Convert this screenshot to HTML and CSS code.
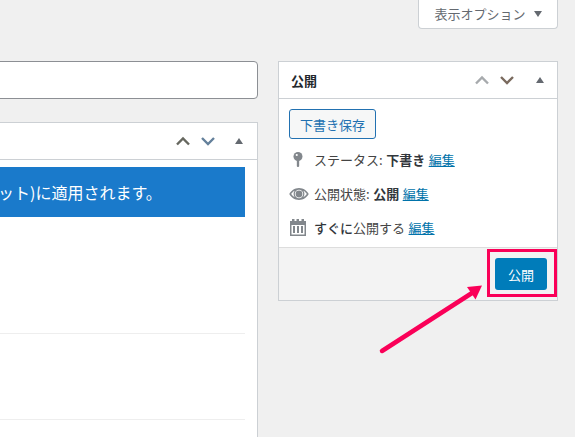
FILE: index.html
```html
<!DOCTYPE html>
<html lang="ja">
<head>
<meta charset="utf-8">
<title>公開</title>
<link rel="stylesheet" href="styles.css">
</head>
<body>
<div class="page">
  <div class="topbar">
    <button class="options">表示オプション<span class="caret"></span></button>
  </div>
  <div class="columns">
    <main class="main">
      <input class="title-input" type="text" aria-label="タイトル">
      <section class="box">
        <header class="box-head">
          <span class="arrows">
            <svg class="chev chev-dark" viewBox="0 0 16 10"><path d="M2 8.500 8 2.500l6 6"/></svg>
            <svg class="chev chev-blue" viewBox="0 0 16 10"><path d="M2 2 8 8l6-6"/></svg>
            <span class="tri"></span>
          </span>
        </header>
        <div class="box-body">
          <div class="notice">ット)に適用されます。</div>
          <div class="row row-first"></div>
          <div class="row row-second"></div>
        </div>
      </section>
    </main>
    <aside class="side">
      <section class="publish">
        <header class="pub-head">
          <h2>公開</h2>
          <span class="arrows">
            <svg class="chev chev-light" viewBox="0 0 16 10"><path d="M2 8.500 8 2.500l6 6"/></svg>
            <svg class="chev chev-brown" viewBox="0 0 16 10"><path d="M2 2 8 8l6-6"/></svg>
            <span class="tri"></span>
          </span>
        </header>
        <div class="pub-body">
          <button class="save">下書き保存</button>
          <div class="meta meta-status">
            <svg class="ico" viewBox="0 0 20 20"><circle cx="10" cy="7.200" r="5"/><rect x="8.700" y="11" width="2.600" height="8" rx="1.200"/><circle class="hole" cx="8.600" cy="5.600" r="1.200"/></svg>
            <span>ステータス: <b>下書き</b> <a href="#">編集</a></span>
          </div>
          <div class="meta meta-visibility">
            <svg class="ico ico-eye" viewBox="0 0 20 14"><path fill-rule="evenodd" d="M10 1C5.500 1 2 3.800.3 7 2 10.200 5.500 13 10 13s8-2.800 9.700-6C18 3.800 14.500 1 10 1Zm0 1.800a4.200 4.200 0 1 1 0 8.400 4.200 4.200 0 0 1 0-8.400ZM2.200 7c.8-1.300 2-2.500 3.400-3.200a6 6 0 0 0 0 6.400A8.500 8.500 0 0 1 2.200 7Zm15.600 0a8.500 8.500 0 0 1-3.400 3.200 6 6 0 0 0 0-6.400c1.400.7 2.600 1.900 3.400 3.200Z"/><circle cx="10" cy="7" r="3.400"/></svg>
            <span>公開状態: <b>公開</b> <a href="#">編集</a></span>
          </div>
          <div class="meta meta-date">
            <svg class="ico" viewBox="0 0 18 18"><path fill-rule="evenodd" d="M1 3h2V1h2.500v2h2V1H10v2h2.500V1H15v2h2v15H1V3Zm1.500 4v9.500h13V7h-13Z"/><path d="M4 8h2v7H4zM8 8h2v7H8zM12 8h2v7h-2z"/></svg>
            <span><b class="soft">すぐに</b>公開する <a href="#">編集</a></span>
          </div>
        </div>
        <footer class="pub-foot">
          <button class="publish-btn">公開</button>
        </footer>
      </section>
    </aside>
  </div>
</div>
<div class="highlight"></div>
<svg class="pointer" viewBox="0 0 575 437"><path class="shaft" d="M382 351 472 293"/><path class="head" d="M482 285.500 467 287 475.500 299.500Z"/></svg>
</body>
</html>
```
FILE: styles.css
```css
html, body { margin: 0; height: 100%; }
body {
  background: #f0f0f0;
  color: #444;
  font-family: "Noto Sans CJK JP", "Noto Sans", sans-serif;
  font-size: 13px;
  overflow: hidden;
  position: relative;
}
.page { height: 437px; display: flex; flex-direction: column; }
.topbar { display: flex; justify-content: flex-end; padding-right: 17px; height: 61px; flex: none; }
.options {
  width: 140px; height: 29px; box-sizing: border-box; padding: 0 0 1px 0;
  background: #fff; border: 1px solid #ccd0d4; border-top: 0; border-radius: 0 0 4px 4px;
  font: inherit; color: #646970; display: flex; align-items: center; justify-content: center; gap: 8px;
}
.caret { width: 0; height: 0; border: 4.500px solid transparent; border-top: 6px solid #646970; border-bottom: 0; }
.columns { display: flex; gap: 20px; flex: 1; min-height: 0; padding-right: 17px; }
.main { width: 268px; margin-left: -10px; flex: none; display: flex; flex-direction: column; }
.title-input {
  display: block; height: 38px; box-sizing: border-box; margin: 0 0 23px; width: 100%;
  background: #fff; border: 1px solid #8c8f94; border-radius: 4px; padding: 0;
}
.box { flex: 1; background: #fff; border: 1px solid #ccd0d4; border-bottom: 0; }
.box-head { height: 36px; border-bottom: 1px solid #ccd0d4; display: flex; justify-content: flex-end; align-items: center; padding-right: 14px; }
.box-head .tri { margin-left: 10px; }
.arrows { display: flex; align-items: center; gap: 9px; }
.chev { width: 16px; height: 10px; fill: none; stroke: #646970; stroke-width: 2.400; }
.chev-dark { stroke: #66675f; }
.chev-blue { stroke: #64809b; }
.chev-light { stroke: #a7aaad; }
.chev-brown { stroke: #7a6a5e; }
.tri { width: 0; height: 0; margin-left: 12px; border: 4px solid transparent; border-bottom: 6px solid #646970; border-top: 0; }
.box-body { padding-top: 7px; padding-right: 12px; }
.notice {
  height: 50px; background: #1a7acb; color: #fff; font-size: 16px; line-height: 50px;
  padding-left: 7px; white-space: nowrap;
}
.row { border-bottom: 1px solid #eee; }
.row-first { height: 116px; }
.row-second { height: 85px; }
.side { width: 280px; flex: none; }
.publish { background: #fff; border: 1px solid #ccd0d4; height: 240px; box-sizing: border-box; display: flex; flex-direction: column; }
.pub-head { height: 36px; flex: none; border-bottom: 1px solid #ccd0d4; display: flex; justify-content: space-between; align-items: center; padding: 0 13px 0 12px; }
.pub-head h2 { margin: 0; font-size: 13px; font-weight: 700; color: #23282d; }
.pub-body { flex: 1; padding: 10px 10px 0; }
.save {
  display: block; width: 87px; height: 30px; box-sizing: border-box; padding: 0;
  background: #f6f7f7; border: 1px solid #2271b1; border-radius: 3px; color: #2271b1; font: inherit;
}
.meta { display: flex; align-items: center; height: 20px; color: #444; white-space: nowrap; word-spacing: 0.600px; }
.meta b { font-weight: 700; color: #32373c; }
.meta b.soft { font-weight: 500; }
.meta a { color: #0073aa; }
.meta-status { margin-top: 10px; }
.meta-visibility { margin-top: 14px; }
.meta-date { margin-top: 14px; }
.ico { width: 18px; height: 18px; fill: #82878c; margin-right: 7px; flex: none; }
.ico .hole { fill: #fff; }
.ico-eye { width: 20px; height: 14px; margin-right: 5px; margin-top: 2px; }
.pub-foot { height: 53px; flex: none; box-sizing: border-box; background: #f3f3f3; border-top: 1px solid #ddd; display: flex; justify-content: flex-end; align-items: center; padding: 0 10px 0 0; }
.publish-btn {
  width: 52px; height: 32px; padding: 0; background: #007cba; border: 0; border-radius: 3px;
  color: #fff; font: inherit; font-size: 13px;
}
.highlight { position: absolute; left: 487px; top: 249px; width: 70px; height: 48px; box-sizing: border-box; border: 3.500px solid #fa0058; }
.pointer { position: absolute; left: 0; top: 0; width: 575px; height: 437px; pointer-events: none; }
.pointer .shaft { stroke: #fa0058; stroke-width: 4.500; stroke-linecap: round; fill: none; }
.pointer .head { fill: #fa0058; }
```
